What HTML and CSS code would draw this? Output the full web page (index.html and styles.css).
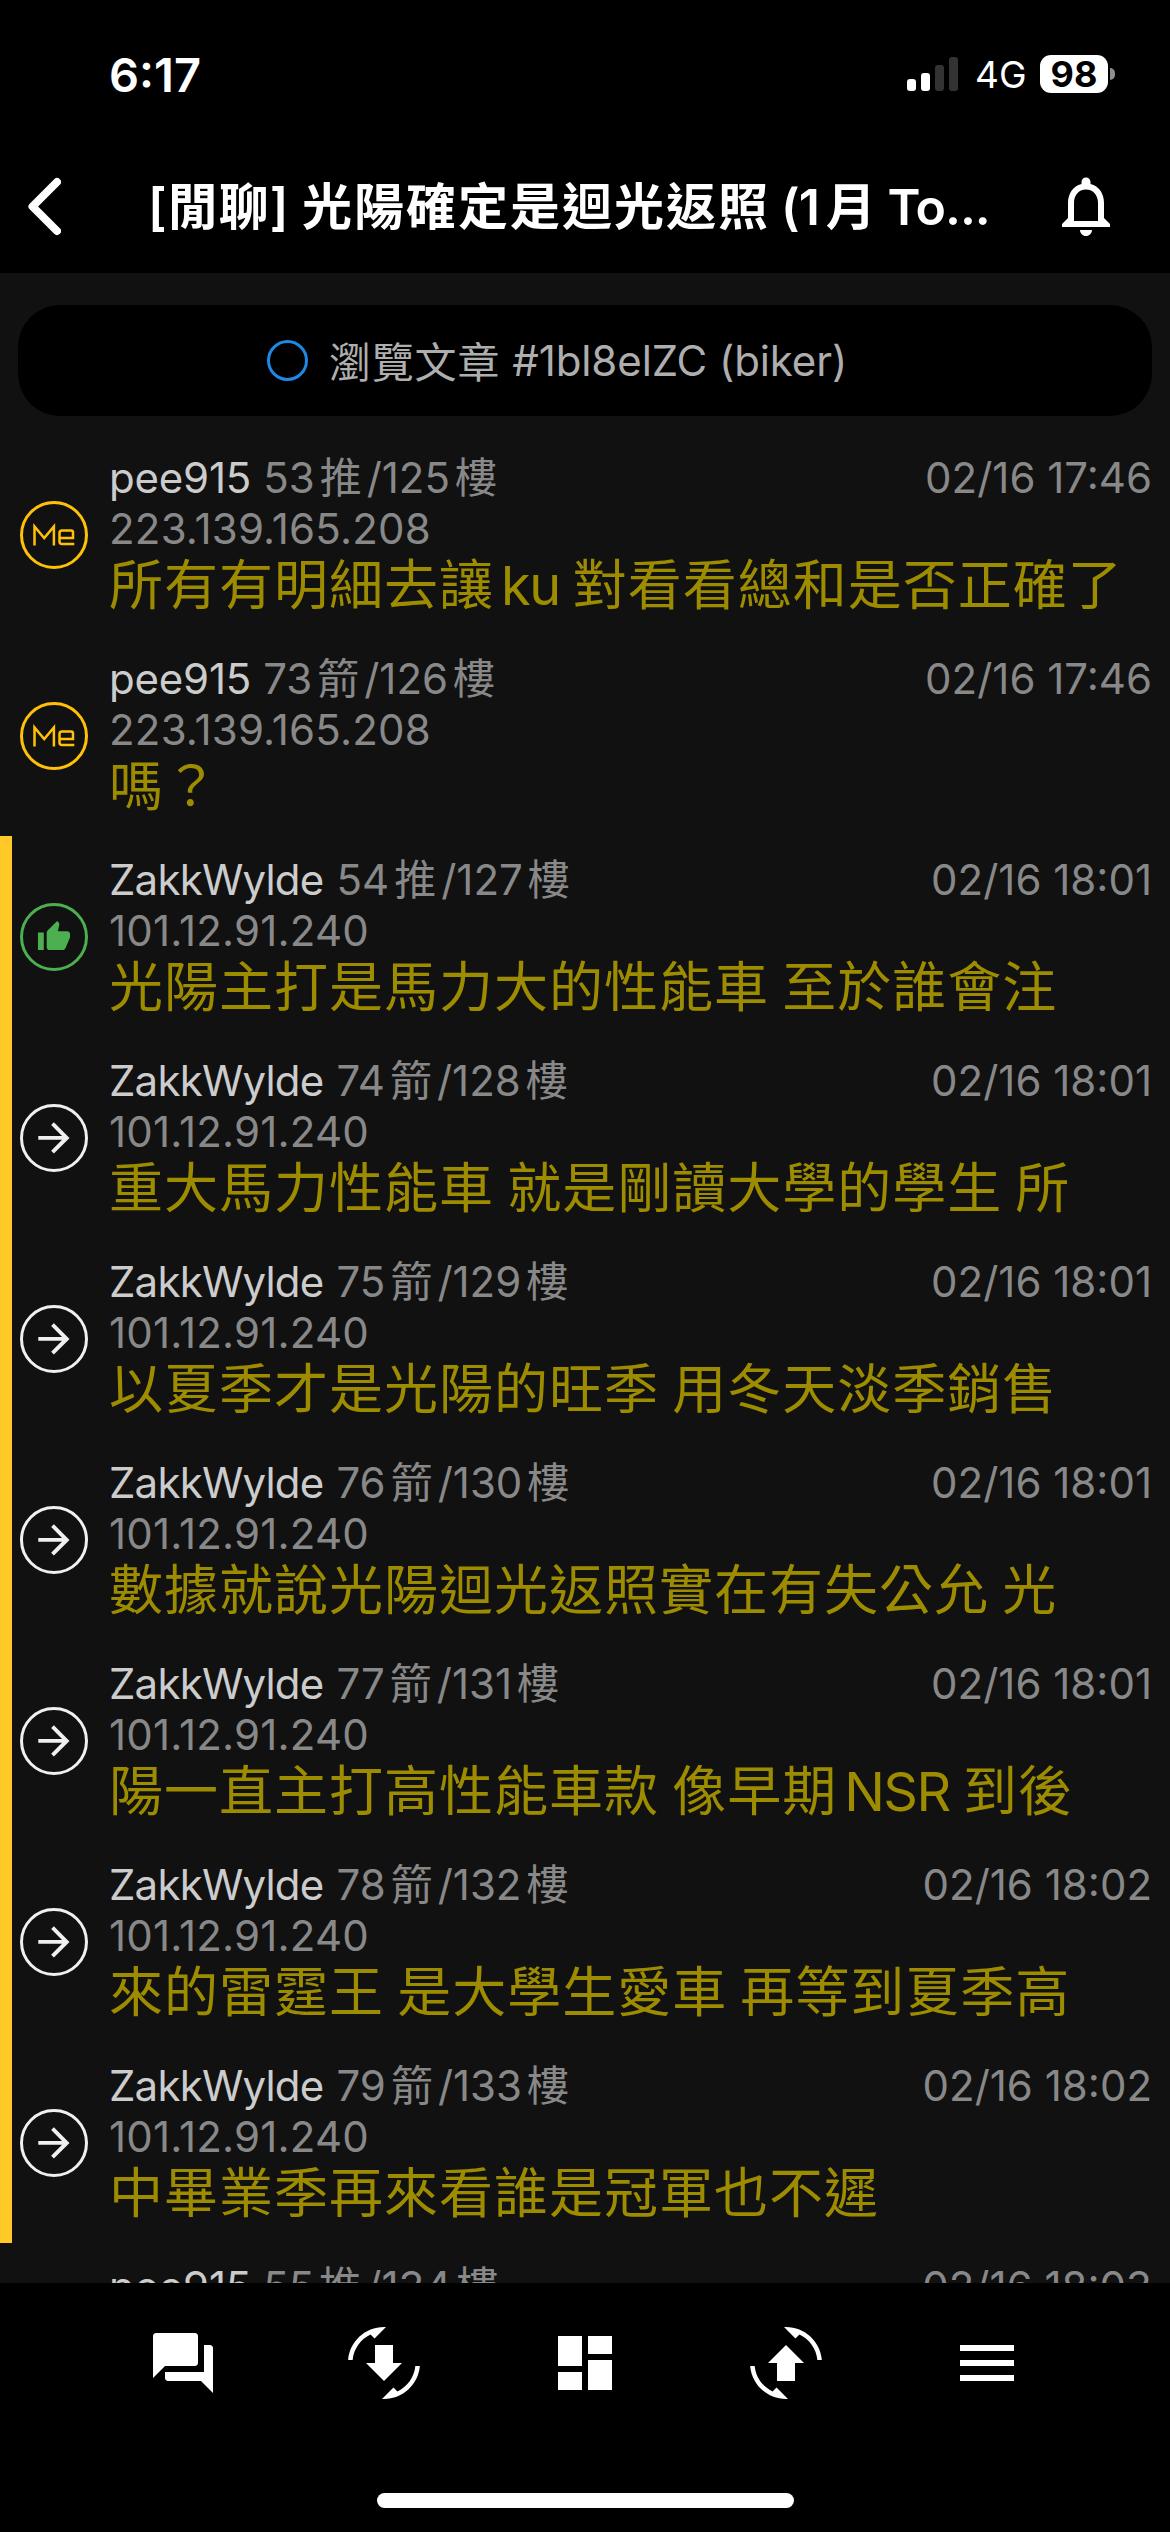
FILE: index.html
```html
<!DOCTYPE html>
<html lang="zh-Hant">
<head>
<meta charset="utf-8">
<title>閒聊</title>
<link rel="stylesheet" href="styles.css">
</head>
<body>
<div class="screen">
  <header class="top">
    <div class="status">
      <span class="clock">6:17</span>
      <span class="signal"><i class="bar b1 on"></i><i class="bar b2 on"></i><i class="bar b3"></i><i class="bar b4"></i></span>
      <span class="network">4G</span>
      <span class="battery">98</span><i class="battery-tip"></i>
    </div>
    <div class="nav">
      <svg class="back" viewBox="0 0 36 60"><path d="M32 5L7.500 29.500L32 54" fill="none" stroke="#fff" stroke-width="8" stroke-linecap="round" stroke-linejoin="round"/></svg>
      <h1 class="title"><span class="tag">[閒聊]</span><span class="subject">光陽確定是迴光返照</span><span class="rest">(1<span class="month">月</span> To...</span></h1>
      <svg class="bell" viewBox="0 0 24 24"><path fill="#fff" d="M12 22c1.100 0 2-.9 2-2h-4c0 1.100.9 2 2 2zm6-6v-5c0-3.070-1.630-5.640-4.500-6.320V4c0-.83-.67-1.500-1.500-1.500s-1.500.67-1.500 1.500v.68C7.640 5.360 6 7.920 6 11v5l-2 2v1h16v-1l-2-2zm-2 1H8v-6c0-2.480 1.510-4.500 4-4.500s4 2.020 4 4.500v6z"/></svg>
    </div>
  </header>
  <main class="thread" id="thread">
    <div class="banner"><i class="ring"></i><span class="cjk">瀏覽文章</span><span class="article">#1bl8elZC (biker)</span></div>
  </main>
  <footer class="bottom">
    <nav class="tabs">
      <svg viewBox="0 0 24 24"><path d="M21 6h-2v9H6v2c0 .55.45 1 1 1h11l4 4V7c0-.55-.45-1-1-1zm-4 6V3c0-.55-.45-1-1-1H3c-.55 0-1 .45-1 1v14l4-4h10c.55 0 1-.45 1-1z"/></svg>
      <svg viewBox="0 0 24 24"><path transform="matrix(-1 0 0 1 24 0)" d="M16.480 2.520c3.270 1.550 5.610 4.720 5.970 8.480h1.500C23.440 4.840 18.290 0 12 0l-.66.03 3.810 3.810 1.330-1.320zM7.520 21.480C4.250 19.940 1.910 16.760 1.550 13H.05C.56 19.160 5.710 24 12 24l.66-.03-3.810-3.810-1.330 1.320z"/><path d="M9 6h6v6h3l-6 6-6-6h3z"/></svg>
      <svg viewBox="0 0 24 24"><path d="M3 13h8V3H3v10zm0 8h8v-6H3v6zm10 0h8V11h-8v10zm0-18v6h8V3h-8z"/></svg>
      <svg viewBox="0 0 24 24"><path d="M16.480 2.520c3.270 1.550 5.610 4.720 5.970 8.480h1.500C23.440 4.840 18.290 0 12 0l-.66.03 3.810 3.810 1.330-1.320zM7.520 21.480C4.250 19.940 1.910 16.760 1.550 13H.05C.56 19.160 5.710 24 12 24l.66-.03-3.810-3.810-1.330 1.320z"/><path d="M12 6l6 6h-3v6H9v-6H6z"/></svg>
      <svg viewBox="0 0 24 24"><path d="M3 18h18v-2H3v2zm0-5h18v-2H3v2zm0-7v2h18V6H3z"/></svg>
    </nav>
    <div class="home"></div>
  </footer>
</div>
<script src="thread.js"></script>
</body>
</html>
```

FILE: styles.css
```css
* { box-sizing: border-box; }
body { margin: 0; background: #000; font-family: Inter, "Noto Sans CJK TC", sans-serif; }
.screen { width: 1170px; height: 2532px; display: flex; flex-direction: column; overflow: hidden; color: #fff; }
.top { height: 273px; flex: none; background: #000; }
.status { height: 147px; padding: 1px 55px 0 109px; display: flex; align-items: center; }
.clock { font-size: 47px; font-weight: 600; flex: 1; }
.signal { display: flex; align-items: flex-end; gap: 5px; height: 34px; margin-right: 17px; }
.bar { width: 9px; border-radius: 3px; background: #333; }
.bar.on { background: #fff; }
.b1 { height: 12px; } .b2 { height: 18px; } .b3 { height: 26px; } .b4 { height: 34px; }
.network { font-size: 37px; width: 65px; }
.battery { width: 68px; height: 38px; border-radius: 11px; background: #fff; color: #000; font-size: 36px; font-weight: 700; line-height: 38px; text-align: center; }
.battery-tip { width: 5px; height: 12px; margin-left: 2px; border-radius: 0 5px 5px 0; background: #8e8e93; }
.nav { height: 120px; display: flex; align-items: center; padding: 0 48px 0 25px; }
.back { width: 36px; height: 60px; flex: none; margin-right: 87px; }
.title { margin: 0; flex: 1; font-size: 50px; line-height: 60px; font-weight: 600; white-space: nowrap; display: flex; }
.tag { letter-spacing: 1px; width: 154px; }
.subject { letter-spacing: 2px; width: 479px; }
.rest { letter-spacing: -1px; }
.month { padding: 0 1px 0 7px; }
.bell { width: 72px; height: 72px; flex: none; margin-bottom: 2px; }
.thread { flex: 1; min-height: 0; overflow: hidden; background: #111; padding-top: 32px; }
.banner { margin: 0 18px 18px; height: 111px; border-radius: 42px; background: #000; color: #aeaeae; font-size: 42px; display: flex; align-items: center; padding-left: 249px; }
.ring { width: 41px; height: 41px; border: 3px solid #1e88e5; border-radius: 50%; margin-right: 21px; }
.cjk { letter-spacing: .8px; margin-top: -3px; }
.article { margin-left: 12px; letter-spacing: -.1px; }
.row { height: 201px; display: flex; align-items: center; padding: 0 18px 0 20px; border-left: 0 solid #ffca28; }
.row.followed { border-left-width: 12px; padding-left: 8px; }
.mark { width: 68px; height: 68px; flex: none; margin-right: 21px; }
.body { flex: 1; min-width: 0; }
.head, .ip { font-size: 42px; line-height: 51px; color: #888; white-space: nowrap; }
.ip { letter-spacing: .2px; }
.head { display: flex; }
.user { color: #ccc; margin-right: 12px; letter-spacing: -.2px; }
.followed .user { letter-spacing: -.8px; margin-right: 13px; }
.count { flex: 1; }
.unit { padding: 0 5px; }
.text { font-size: 54px; line-height: 64px; min-height: 64px; letter-spacing: 1px; word-spacing: -3px; color: #9e8c00; white-space: nowrap; }
.latin { padding-left: 7px; letter-spacing: -1.5px; }
.bottom { height: 249px; flex: none; background: #000; display: flex; flex-direction: column; align-items: center; }
.tabs { display: flex; gap: 129px; padding-top: 44px; height: 210px; }
.tabs svg { width: 72px; height: 72px; fill: #fff; }
.home { width: 417px; height: 15px; border-radius: 8px; background: #fff; }
```

FILE: thread.js
```js
const icons = {
  me: '<svg class="mark" viewBox="0 0 68 68" fill="none" stroke="#ffc107"><circle cx="34" cy="34" r="32.500" stroke-width="3"/><path stroke-width="2.500" d="M14.500 44.500V25.500l9.700 11.500 9.700-11.500v19M54.300 43H42a2.500 2.500 0 0 1-2.500-2.500V32A2.500 2.500 0 0 1 42 29.500h9A2 2 0 0 1 53 31.500V37H40"/></svg>',
  push: '<svg class="mark" viewBox="0 0 68 68"><circle cx="34" cy="34" r="32.500" fill="none" stroke="#4caf50" stroke-width="3"/><path transform="translate(16.500 16.500) scale(1.458)" fill="#4caf50" d="M1 21h4V9H1v12zm22-11c0-1.100-.9-2-2-2h-6.310l.95-4.570.03-.32c0-.41-.17-.79-.44-1.060L14.170 1 7.590 7.590C7.220 7.950 7 8.450 7 9v10c0 1.100.9 2 2 2h9c.83 0 1.540-.5 1.840-1.220l3.020-7.050c.09-.23.14-.47.14-.73v-2z"/></svg>',
  arrow: '<svg class="mark" viewBox="0 0 68 68"><circle cx="34" cy="34" r="32.500" fill="none" stroke="#f0f0f0" stroke-width="3"/><path transform="translate(10.500 10.500) scale(1.950)" fill="#f0f0f0" d="M12 4l-1.410 1.410L16.170 11H4v2h12.170l-5.580 5.590L12 20l8-8z"/></svg>'
};

const me = '223.139.165.208', zakk = '101.12.91.240';
const comments = [
  ['me', 'pee915', 53, '推', 125, '17:46', me, '所有有明細去讓<span class="latin">ku</span> 對看看總和是否正確了'],
  ['me', 'pee915', 73, '箭', 126, '17:46', me, '嗎？'],
  ['push', 'ZakkWylde', 54, '推', 127, '18:01', zakk, '光陽主打是馬力大的性能車 至於誰會注'],
  ['arrow', 'ZakkWylde', 74, '箭', 128, '18:01', zakk, '重大馬力性能車 就是剛讀大學的學生 所'],
  ['arrow', 'ZakkWylde', 75, '箭', 129, '18:01', zakk, '以夏季才是光陽的旺季 用冬天淡季銷售'],
  ['arrow', 'ZakkWylde', 76, '箭', 130, '18:01', zakk, '數據就說光陽迴光返照實在有失公允 光'],
  ['arrow', 'ZakkWylde', 77, '箭', 131, '18:01', zakk, '陽一直主打高性能車款 像早期<span class="latin">NSR</span> 到後'],
  ['arrow', 'ZakkWylde', 78, '箭', 132, '18:02', zakk, '來的雷霆王 是大學生愛車 再等到夏季高'],
  ['arrow', 'ZakkWylde', 79, '箭', 133, '18:02', zakk, '中畢業季再來看誰是冠軍也不遲'],
  ['me', 'pee915', 55, '推', 134, '18:03', '', '']
];

document.getElementById('thread').insertAdjacentHTML('beforeend', comments.map(
  ([icon, user, n, unit, floor, time, ip, text]) => `
  <article class="row${icon === 'me' ? '' : ' followed'}">
    ${icons[icon]}
    <div class="body">
      <div class="head"><span class="user">${user}</span><span class="count">${n}<span class="unit">${unit}</span>/${floor}<span class="unit">樓</span></span><time class="time">02/16 ${time}</time></div>
      <div class="ip">${ip || '&nbsp;'}</div>
      <div class="text">${text}</div>
    </div>
  </article>`).join(''));
```
